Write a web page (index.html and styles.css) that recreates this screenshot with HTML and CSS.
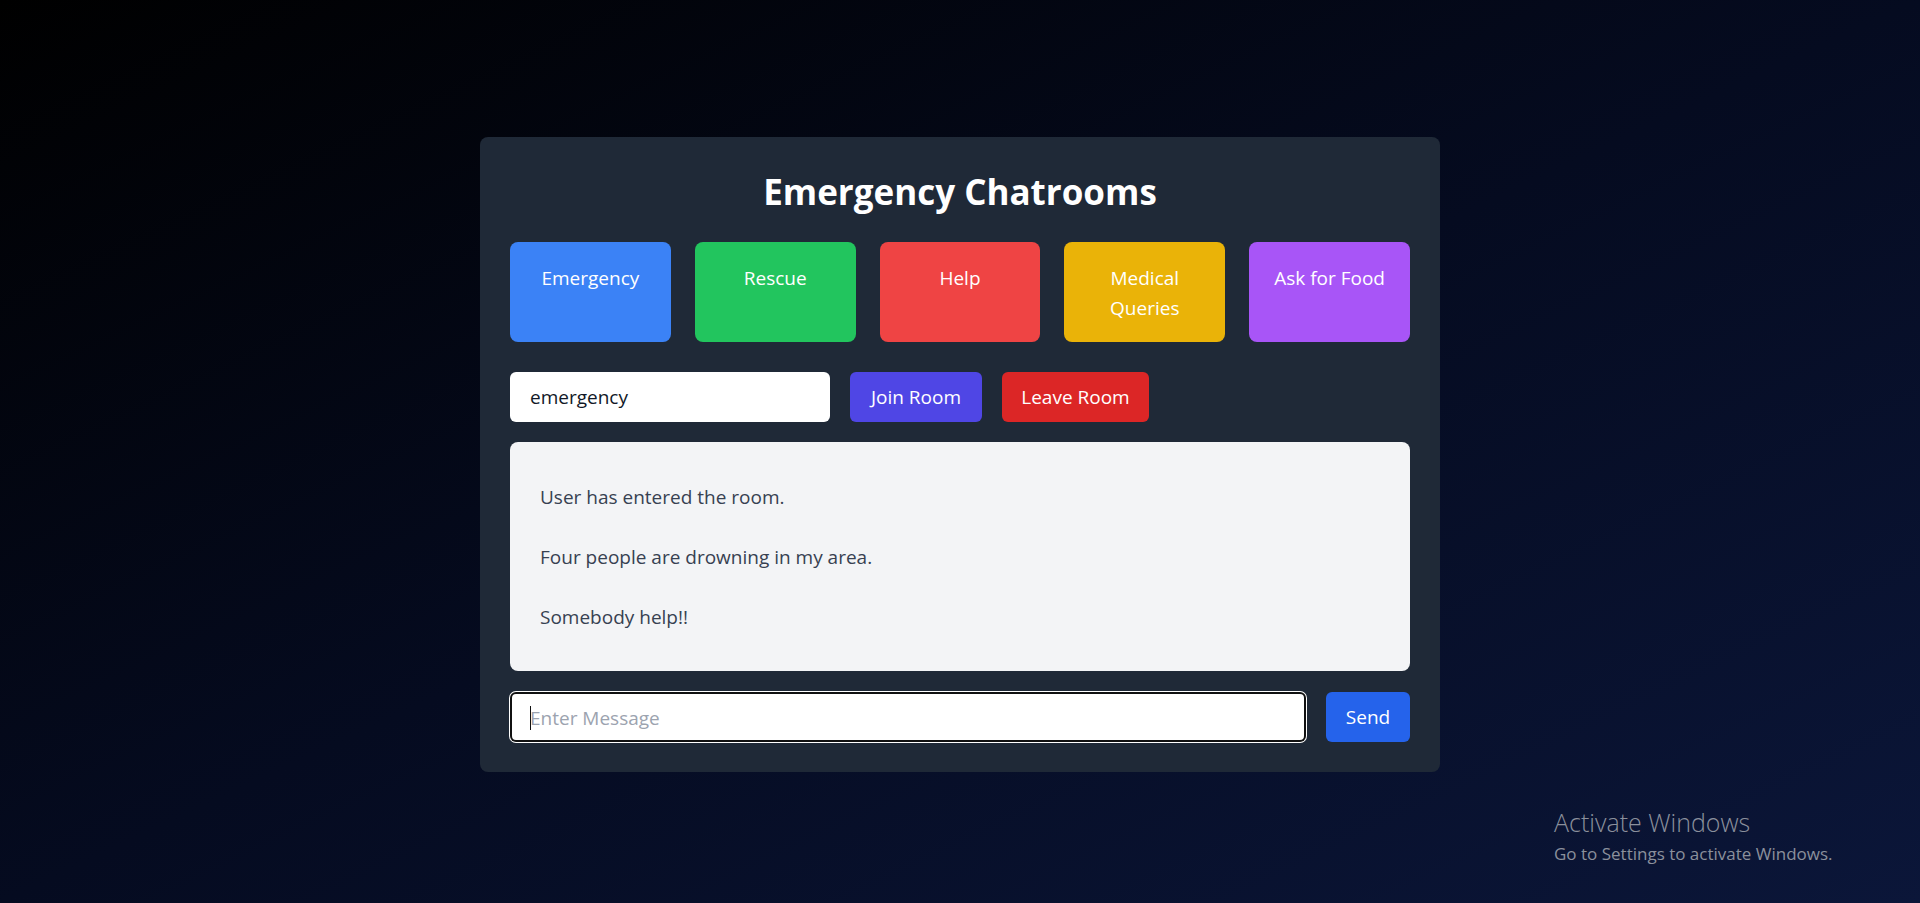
FILE: index.html
```html
<!DOCTYPE html>
<html lang="en">
<head>
<meta charset="utf-8">
<title>Emergency Chatrooms</title>
<link rel="stylesheet" href="styles.css">
</head>
<body>
<main class="page">
  <section class="card">
    <h1 class="title">Emergency Chatrooms</h1>
    <div class="rooms">
      <button class="room room-blue">Emergency</button>
      <button class="room room-green">Rescue</button>
      <button class="room room-red">Help</button>
      <button class="room room-yellow">Medical Queries</button>
      <button class="room room-purple">Ask for Food</button>
    </div>
    <div class="join-row">
      <input class="room-input" type="text" value="emergency">
      <button class="btn btn-join">Join Room</button>
      <button class="btn btn-leave">Leave Room</button>
    </div>
    <div class="messages">
      <p class="msg">User has entered the room.</p>
      <p class="msg">Four people are drowning in my area.</p>
      <p class="msg">Somebody help!!</p>
    </div>
    <div class="send-row">
      <div class="msg-field"><span class="caret"></span><input class="msg-input" type="text" placeholder="Enter Message"></div>
      <button class="btn btn-send">Send</button>
    </div>
  </section>
</main>
<div class="activate">
  <div class="activate-title">Activate Windows</div>
  <div class="activate-sub">Go to Settings to activate Windows.</div>
</div>
</body>
</html>
```

FILE: styles.css
```css
* { box-sizing: border-box; }
html, body { margin: 0; padding: 0; }
body {
  font-family: "Open Sans", "Noto Sans", sans-serif;
  background: linear-gradient(to bottom right, #000000 0%, #050b20 50%, #0b1639 100%);
  min-height: 903px;
  color: #fff;
}
.page {
  min-height: 903px;
  display: flex;
  align-items: center;
  justify-content: center;
  padding-top: 5px;
}
.card {
  width: 960px;
  background: #1f2937;
  border-radius: 8px;
  padding: 30px;
}
.title {
  margin: 0 0 35px;
  font-size: 35px;
  line-height: 40px;
  font-weight: 700;
  text-align: center;
  color: #fff;
  padding-top: 5px;
  height: 40px;
}
.rooms {
  display: grid;
  grid-template-columns: repeat(5, 1fr);
  gap: 24px;
  margin-bottom: 30px;
}
.room {
  height: 100px;
  border: none;
  border-radius: 8px;
  color: #fff;
  font-family: inherit;
  font-size: 19px;
  line-height: 30px;
  padding: 21px 20px 0;
  text-align: center;
  align-self: start;
  display: flex;
  justify-content: center;
  align-items: flex-start;
}
.room-blue { background: #3b82f6; }
.room-green { background: #22c55e; }
.room-red { background: #ef4444; }
.room-yellow { background: #eab308; }
.room-purple { background: #a855f7; }
.join-row {
  display: flex;
  gap: 20px;
  height: 50px;
  margin-bottom: 20px;
}
.room-input {
  width: 320px;
  height: 50px;
  border: none;
  border-radius: 6px;
  background: #fff;
  padding: 0 20px;
  font-family: inherit;
  font-size: 19px;
  color: #111827;
  outline: none;
}
.btn {
  height: 50px;
  border: none;
  border-radius: 6px;
  color: #fff;
  font-family: inherit;
  font-size: 19px;
  padding: 0 18px;
}
.btn-join { background: #4f46e5; width: 132px; }
.btn-leave { background: #dc2626; width: 147px; }
.btn-send { background: #2563eb; width: 84px; }
.messages {
  background: #f3f4f6;
  border-radius: 8px;
  height: 229px;
  padding: 25px 30px 17px;
  margin-bottom: 20px;
}
.msg {
  margin: 0;
  padding: 15px 0;
  font-size: 19px;
  line-height: 30px;
  color: #374151;
}
.send-row {
  display: flex;
  gap: 20px;
  height: 51px;
  padding-top: 1px;
}
.msg-field {
  flex: 1;
  position: relative;
  height: 50px;
  background: #fff;
  border-radius: 6px;
  box-shadow: inset 0 0 0 2px #111111, 0 0 0 1px #ffffff;
}
.caret {
  position: absolute;
  left: 20px;
  top: 14px;
  width: 1px;
  height: 24px;
  background: #111;
}
.msg-input {
  width: 100%;
  height: 50px;
  border: none;
  background: transparent;
  padding: 3px 20px 0;
  font-family: inherit;
  font-size: 19px;
  outline: none;
  color: #111827;
}
.msg-input::placeholder { color: #9ca3af; }
.activate {
  position: absolute;
  left: 1554px;
  top: 806px;
  color: #8b909c;
  font-family: "Open Sans", sans-serif;
}
.activate-title {
  font-size: 25px;
  line-height: 32px;
  font-weight: 300;
}
.activate-sub {
  font-size: 17px;
  line-height: 24px;
  font-weight: 400;
  margin-top: 4px;
}
```
